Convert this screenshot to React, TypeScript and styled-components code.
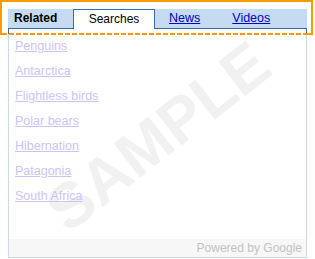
import React from 'react'
import styled, { createGlobalStyle } from 'styled-components'

const GlobalStyle = createGlobalStyle`
  html, body {
    margin: 0;
    padding: 0;
    background: #ffffff;
  }
  body {
    font-family: 'Liberation Sans', Arial, sans-serif;
  }
`

const colors = {
  orange: '#ff9900',
  tabBg: '#c6dbf1',
  tabLine: '#3a6ea5',
  panelLine: '#ccd9e8',
  link: '#0000cc',
  faded: '#ccc4f6',
  footerBg: '#f7f7f7',
  footerText: '#c2c2c2',
  watermark: '#f1f1f1',
}

const Page = styled.div`
  padding: 9px 8px 1px 8px;
  width: 299px;
`

const Widget = styled.div`
  position: relative;
  width: 299px;
`

const TabBar = styled.div`
  display: flex;
  align-items: flex-end;
  height: 19px;
  background: ${colors.tabBg};
  border-bottom: 1px solid ${colors.tabLine};
`

const Title = styled.div`
  width: 65px;
  padding-left: 6px;
  box-sizing: border-box;
  height: 19px;
  line-height: 19px;
  font-size: 12px;
  font-weight: bold;
  color: #000;
`

const Tab = styled.div<{ $active?: boolean }>`
  box-sizing: border-box;
  height: ${p => (p.$active ? '20px' : '19px')};
  margin-bottom: ${p => (p.$active ? '-1px' : '0')};
  width: ${p => (p.$active ? '82px' : 'auto')};
  padding: ${p => (p.$active ? '0' : '0 0 0 14px')};
  margin-right: ${p => (p.$active ? '0' : '18px')};
  text-align: center;
  line-height: 19px;
  font-size: 12px;
  background: ${p => (p.$active ? '#ffffff' : 'transparent')};
  border: ${p => (p.$active ? `1px solid ${colors.tabLine}` : 'none')};
  border-bottom: none;
  color: #000;
`

const TabLink = styled.a`
  color: ${colors.link};
  text-decoration: underline;
  font-size: 12.5px;
`

const TopGap = styled.div`
  height: 5px;
  border-left: 1px solid ${colors.tabLine};
  border-right: 1px solid ${colors.tabLine};
`

const Body = styled.div`
  position: relative;
  border-left: 1px solid ${colors.panelLine};
  border-right: 1px solid ${colors.panelLine};
  border-bottom: 1px solid ${colors.panelLine};
`

const Watermark = styled.div`
  position: absolute;
  left: 50%;
  top: 102px;
  transform: translate(-50%, -50%) rotate(-38deg);
  font-size: 63px;
  line-height: 50px;
  font-weight: bold;
  color: ${colors.watermark};
  white-space: nowrap;
  pointer-events: none;
  user-select: none;
`

const List = styled.ul`
  position: relative;
  list-style: none;
  margin: 0;
  padding: 0 0 0 6px;
  height: 205px;
`

const Item = styled.li`
  height: 25px;
  line-height: 25px;
  font-size: 12.5px;
`

const FadedLink = styled.a`
  color: ${colors.faded};
  text-decoration: underline;
`

const Footer = styled.div`
  height: 18px;
  line-height: 18px;
  padding-right: 4px;
  text-align: right;
  font-size: 12px;
  color: ${colors.footerText};
  background: ${colors.footerBg};
`

const Highlight = styled.div`
  position: absolute;
  left: -8px;
  top: -9px;
  width: 313px;
  height: 35px;
  box-sizing: border-box;
  border: 2px solid ${colors.orange};
  border-bottom: none;
  pointer-events: none;
`

const HighlightEdge = styled.div`
  position: absolute;
  left: -2px;
  right: -2px;
  bottom: 0;
  height: 2px;
  background:
    linear-gradient(${colors.orange}, ${colors.orange}) left / 7px 100% no-repeat,
    linear-gradient(${colors.orange}, ${colors.orange}) right / 6px 100% no-repeat,
    repeating-linear-gradient(90deg, transparent 0 2px, ${colors.orange} 2px 7px);
`

const topics = [
  'Penguins',
  'Antarctica',
  'Flightless birds',
  'Polar bears',
  'Hibernation',
  'Patagonia',
  'South Africa',
]

export default function App() {
  return (
    <>
      <GlobalStyle />
      <Page>
        <Widget>
          <TabBar>
            <Title>Related</Title>
            <Tab $active>Searches</Tab>
            <Tab>
              <TabLink href="#">News</TabLink>
            </Tab>
            <Tab>
              <TabLink href="#">Videos</TabLink>
            </Tab>
          </TabBar>
          <TopGap />
          <Body>
            <Watermark>SAMPLE</Watermark>
            <List>
              {topics.map(t => (
                <Item key={t}>
                  <FadedLink href="#">{t}</FadedLink>
                </Item>
              ))}
            </List>
            <Footer>Powered by Google</Footer>
          </Body>
          <Highlight>
            <HighlightEdge />
          </Highlight>
        </Widget>
      </Page>
    </>
  )
}
